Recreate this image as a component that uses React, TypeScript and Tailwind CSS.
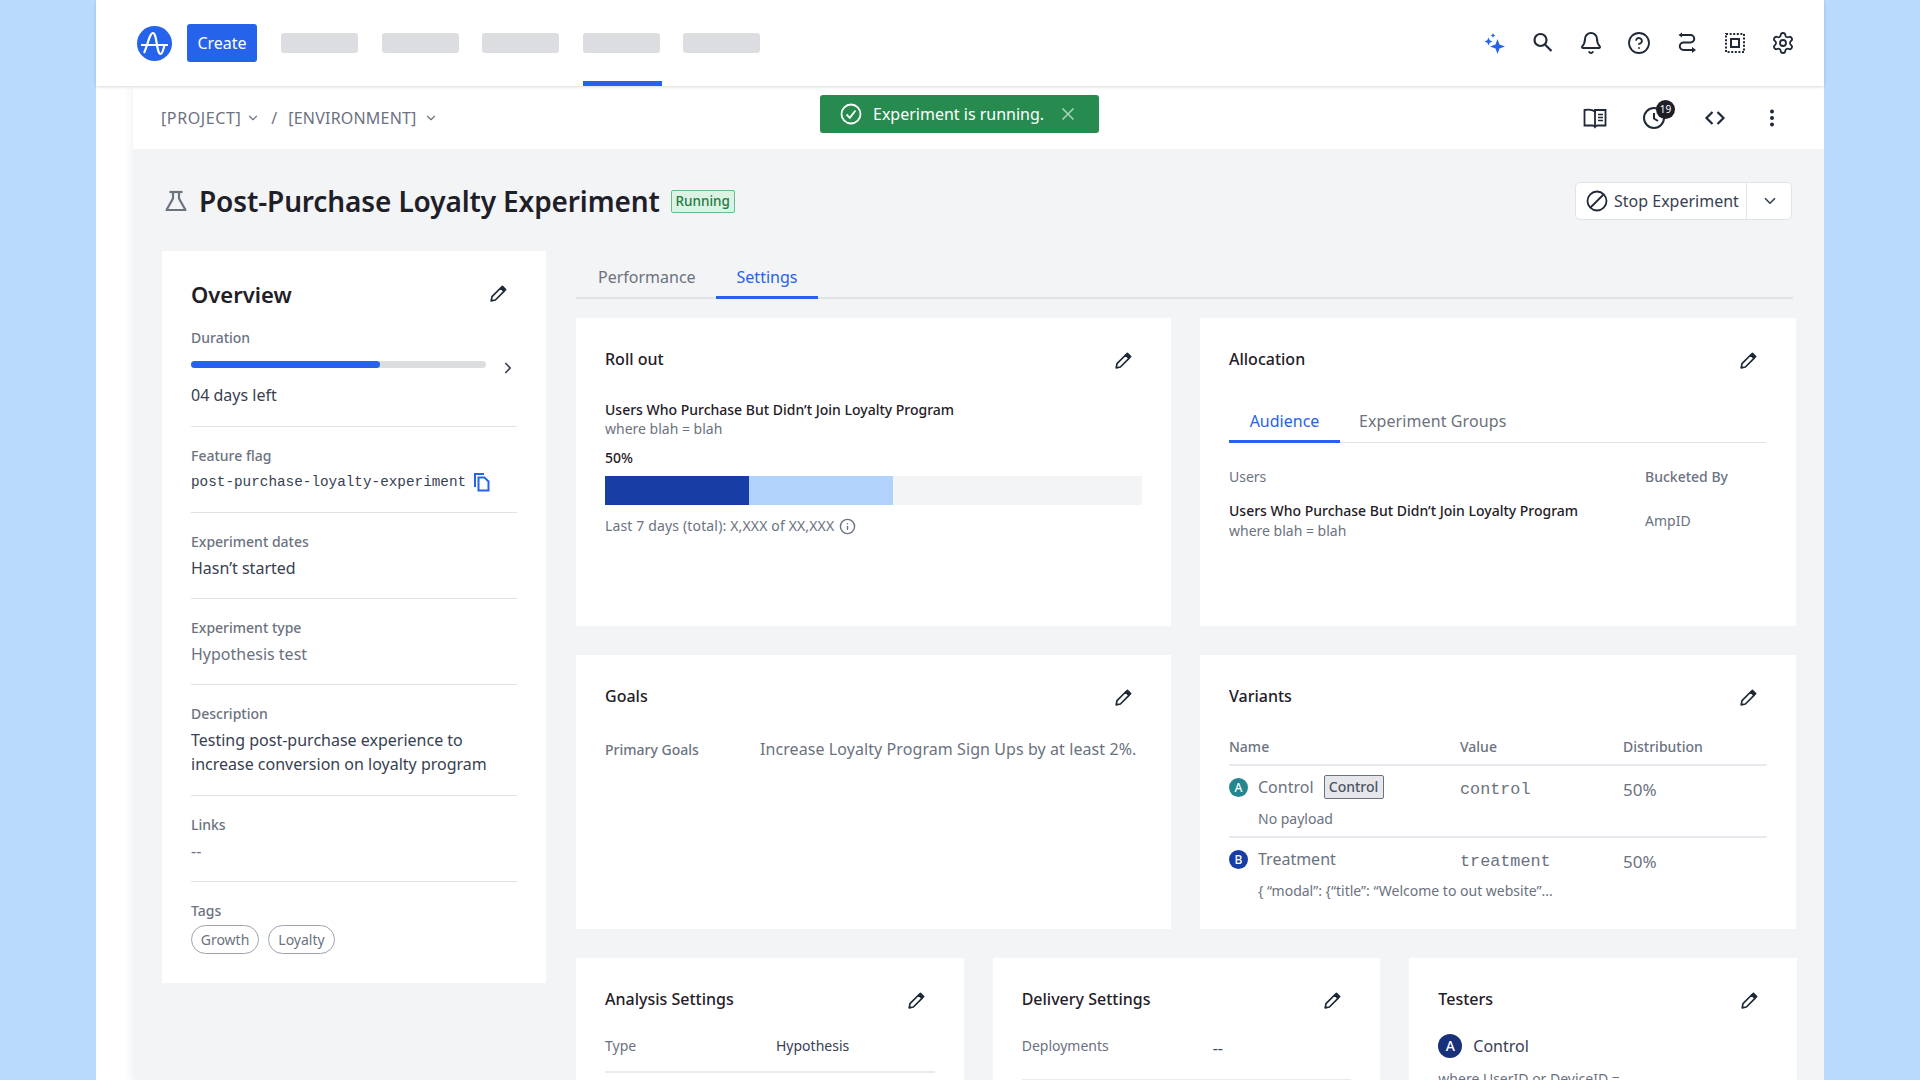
import { Bell, ChevronDown, ChevronRight, CircleHelp, Info, Settings } from 'lucide-react';

const PencilIcon = ({ className }: { className?: string }) => (
  <svg className={className} width="18" height="18" viewBox="0 0 18 18" fill="none" stroke="#1f2937" strokeWidth="1.7" strokeLinejoin="round">
    <path d="M2.200 15.800 3 11.600 11.600 3 15 6.400 6.400 15Z" />
    <path d="M13.400 1.400 16.600 4.600 15.200 6 12 2.800Z" fill="#1f2937" />
  </svg>
);

const SparkIcon = () => (
  <svg width="24" height="24" viewBox="0 0 24 24" fill="#2563eb">
    <path d="M14.500 8 16.500 13.500 22 15.500 16.500 17.500 14.500 23 12.500 17.500 7 15.500 12.500 13.500Z" />
    <path d="M5.500 6.500 6.700 9.300 9.500 10.500 6.700 11.700 5.500 14.500 4.300 11.700 1.500 10.500 4.300 9.300Z" />
    <path d="M10 2 10.800 3.700 12.500 4.500 10.800 5.300 10 7 9.200 5.300 7.500 4.500 9.200 3.700Z" />
  </svg>
);

const SearchIcon = () => (
  <svg width="24" height="24" viewBox="0 0 24 24" fill="none" stroke="#1f2937" strokeWidth="2.200">
    <circle cx="9.500" cy="9" r="6" />
    <path d="M14 13.500 20.500 20" />
  </svg>
);

const RouteIcon = () => (
  <svg width="24" height="24" viewBox="0 0 24 24" fill="none" stroke="#1f2937" strokeWidth="2">
    <path d="M6 4H15.500a3.500 3.500 0 0 1 0 7.500H8.500a3.500 3.500 0 0 0 0 7.500H17" />
    <path d="M17 16 21 19 17 22Z" fill="#1f2937" stroke="none" />
    <path d="M7 1.500 3.500 4 7 6.500Z" fill="#1f2937" stroke="none" />
  </svg>
);

const FrameIcon = () => (
  <svg width="24" height="24" viewBox="0 0 24 24" fill="none" stroke="#1f2937">
    <rect x="3" y="3" width="18" height="18" strokeWidth="2" strokeDasharray="2 1.600" />
    <rect x="8" y="8" width="8" height="8" strokeWidth="2" />
  </svg>
);

const BookIcon = () => (
  <svg width="26" height="26" viewBox="0 0 26 26" fill="none" stroke="#1f2937" strokeWidth="1.800">
    <path d="M13 6.500C11 5 6 4.500 2.500 5v15.500h8c1.200 0 2 .6 2.500 1.500.5-.9 1.300-1.500 2.500-1.500h8V5H13Z" />
    <path d="M13 6v15" />
    <path d="M16 9.500h5M16 12.500h5M16 15.500h5" strokeWidth="1.500" />
  </svg>
);

const ClockBadge = () => (
  <div className="relative w-6 h-6 mr-[2px]">
    <svg width="24" height="24" viewBox="0 0 24 24" fill="none" stroke="#1f2937" strokeWidth="2">
      <circle cx="12" cy="12" r="10" />
      <path d="M12 7v5.500l4 2.500" />
    </svg>
    <span className="absolute -top-[6px] left-[14px] w-[19px] h-[19px] rounded-full bg-[#1f2027] text-white text-[10px] leading-[19px] text-center">
      19
    </span>
  </div>
);

const CodeIcon = () => (
  <svg width="24" height="24" viewBox="0 0 24 24" fill="none" stroke="#1f2937" strokeWidth="2.200">
    <path d="M9.500 6 3.500 12l6 6M14.500 6l6 6-6 6" />
  </svg>
);

const KebabIcon = () => (
  <svg width="24" height="24" viewBox="0 0 24 24" fill="#1f2937">
    <circle cx="12" cy="5.500" r="2" />
    <circle cx="12" cy="12" r="2" />
    <circle cx="12" cy="18.500" r="2" />
  </svg>
);

const StopIcon = () => (
  <svg width="22" height="22" viewBox="0 0 22 22" fill="none" stroke="#1f2937" strokeWidth="1.800">
    <circle cx="11" cy="11" r="9.500" />
    <path d="M4.500 17.500 17.500 4.500" />
  </svg>
);

const FlaskIcon = () => (
  <svg width="24" height="24" viewBox="0 0 24 24" fill="none" stroke="#6b7280" strokeWidth="2.200" strokeLinejoin="round">
    <path d="M5.500 3h13" />
    <path d="M9 3v6.500L2.500 21h19L15 9.500V3" />
  </svg>
);

const CopyIcon = () => (
  <svg width="18" height="20" viewBox="0 0 18 20" fill="none" stroke="#2563eb" strokeWidth="2">
    <path d="M2 15V2h9" />
    <path d="M5.500 5.500h6l4 4v9h-10Z" />
  </svg>
);

const CheckCircleIcon = () => (
  <svg width="22" height="22" viewBox="0 0 22 22" fill="none" stroke="#fff" strokeWidth="1.800">
    <circle cx="11" cy="11" r="9.500" />
    <path d="M6.500 11.500 9.800 14.800 15.500 7.500" />
  </svg>
);

const Logo = () => (
  <svg width="35" height="35" viewBox="0 0 35 35">
    <circle cx="17.500" cy="17.500" r="17.500" fill="#2563eb" />
    <path d="M4 19H31" fill="none" stroke="#fff" strokeWidth="2" />
    <path d="M7 27C10.500 20 12.500 7 16 7C20 7 19.500 28 23.500 28C25.500 28 26.500 23 27.500 19" fill="none" stroke="#fff" strokeWidth="2.200" />
  </svg>
);

const Card = ({ title, children }: { title: string; children?: React.ReactNode }) => (
  <div className="bg-white pt-[29px] px-[29px] h-full">
    <div className="flex items-start justify-between h-6">
      <h3 className="text-base leading-6 font-medium text-[#1f2027]">{title}</h3>
      <PencilIcon className="mr-[10px] mt-[5px]" />
    </div>
    {children}
  </div>
);

const OverviewField = ({ label, children }: { label: string; children: React.ReactNode }) => (
  <div className="pt-[19px] pb-[18px] border-b border-[#e1e3e8]">
    <p className="text-sm leading-5 font-medium text-[#6b7280]">{label}</p>
    <div className="mt-1 text-base leading-6 text-[#374151]">{children}</div>
  </div>
);

const Tag = ({ label, width }: { label: string; width: string }) => (
  <span className={`h-[29px] rounded-full border border-[#9ca3af] text-sm leading-[27px] text-center text-[#6b7280] ${width}`}>
    {label}
  </span>
);

const VariantRow = ({
  letter,
  color,
  name,
  tag,
  value,
  payload,
  last,
}: {
  letter: string;
  color: string;
  name: string;
  tag?: boolean;
  value: string;
  payload: string;
  last?: boolean;
}) => (
  <div className={`grid grid-cols-[231px_163px_1fr] pt-[9px] ${last ? '' : 'pb-[7px] border-b-2 border-[#e9eaef]'}`}>
    <div>
      <div className="flex items-center h-6">
        <span className={`w-[19px] h-[19px] rounded-full text-white text-xs font-medium leading-[19px] text-center ${color}`}>{letter}</span>
        <span className="ml-[10px] text-base text-[#6b7280]">{name}</span>
        {tag && (
          <span className="ml-[10px] w-[60px] h-6 rounded-[2px] border border-[#6b7280] bg-[#e5e7eb] text-sm font-medium leading-[22px] text-center text-[#4b5563]">
            Control
          </span>
        )}
      </div>
      <p className="mt-[10px] ml-[29px] text-sm leading-5 whitespace-nowrap text-[#6b7280]">{payload}</p>
    </div>
    <p className="mt-[3px] font-['Liberation_Mono',monospace] text-[16.800px] leading-6 text-[#6b7280]">{value}</p>
    <p className="mt-[3px] text-[17px] leading-6 text-[#6b7280]">50%</p>
  </div>
);

export default function App() {
  return (
    <div className="w-[1920px] h-[1080px] overflow-hidden bg-[#b9dafd] px-[96px] font-['Noto_Sans',sans-serif]">
      <div className="relative flex flex-col h-full bg-white">
        <header className="relative z-10 flex items-center justify-between shrink-0 h-[86px] pl-[41px] pr-[29px] bg-white shadow-[0_1px_3px_rgba(0,0,0,0.15)]">
          <div className="flex items-center h-full">
            <Logo />
            <button className="ml-[15px] w-[70px] h-[38px] rounded-[3px] bg-[#2563eb] text-base text-white">Create</button>
            <nav className="flex items-center gap-[23.500px] ml-6 h-full">
              <div className="w-[77px] h-5 rounded-[3px] bg-[#dcdde1]" />
              <div className="w-[77px] h-5 rounded-[3px] bg-[#dcdde1]" />
              <div className="w-[77px] h-5 rounded-[3px] bg-[#dcdde1]" />
              <div className="relative flex items-center w-[77px] h-full">
                <div className="w-[77px] h-5 rounded-[3px] bg-[#dcdde1]" />
                <div className="absolute bottom-0 left-0 w-[79px] h-[5px] bg-[#2563eb]" />
              </div>
              <div className="w-[77px] h-5 rounded-[3px] bg-[#dcdde1]" />
            </nav>
          </div>
          <div className="flex items-center gap-6 text-[#1f2937]">
            <SparkIcon />
            <SearchIcon />
            <Bell size={24} strokeWidth={2} />
            <CircleHelp size={24} strokeWidth={1.8} />
            <RouteIcon />
            <FrameIcon />
            <Settings size={24} strokeWidth={1.8} />
          </div>
        </header>

        <div className="absolute left-[724px] top-[95px] z-20 flex items-center w-[279px] h-[38px] rounded-[3px] bg-[#278a4f] pl-[20px] text-white">
          <CheckCircleIcon />
          <span className="ml-[11px] text-base whitespace-nowrap">Experiment is running.</span>
          <svg className="ml-[16px]" width="16" height="16" viewBox="0 0 16 16" fill="none" stroke="#a7d3b8" strokeWidth="1.600">
            <path d="M2.500 2.500 13.500 13.500M13.500 2.500 2.500 13.500" />
          </svg>
        </div>

        <div className="flex flex-1 min-h-0">
          <div className="w-[37px] shrink-0 bg-white" />
          <main className="flex-1 min-w-0 flex flex-col shadow-[-4px_0_6px_rgba(0,0,0,0.04)]">
            <div className="flex items-center justify-between shrink-0 h-[63px] pl-[28px] pr-[40px] bg-white">
              <div className="flex items-center text-base text-[#6b7280]">
                <span className="tracking-[0.600px]">[PROJECT]</span>
                <ChevronDown size={14} className="ml-[5px]" />
                <span className="ml-[11px]">/</span>
                <span className="ml-[11px] tracking-[0.200px]">[ENVIRONMENT]</span>
                <ChevronDown size={14} className="ml-[7px]" />
              </div>
              <div className="flex items-center">
                <BookIcon />
                <div className="ml-[34px]"><ClockBadge /></div>
                <div className="ml-[35px]"><CodeIcon /></div>
                <div className="ml-[33px]"><KebabIcon /></div>
              </div>
            </div>

            <div className="flex-1 min-h-0 bg-[#f3f4f6] pt-[33px] pl-[29px]">
              <div className="flex items-center h-[38px] pr-[32px]">
                <div className="ml-[2px]"><FlaskIcon /></div>
                <h1 className="ml-[11px] text-[28px] tracking-[-0.120px] leading-[38px] font-semibold whitespace-nowrap text-[#1f2027]">Post-Purchase Loyalty Experiment</h1>
                <span className="ml-[11px] w-[64px] h-[23px] rounded-[2px] border border-[#6dbb8c] bg-[#dcf3e4] text-[13.500px] font-medium leading-[21px] text-center text-[#1f7a45]">
                  Running
                </span>
                <div className="ml-auto flex h-[38px] rounded-[5px] border border-[#e1e3e8] bg-white text-[#374151]">
                  <div className="flex items-center w-[171px] pl-[10px] border-r border-[#e1e3e8]">
                    <StopIcon />
                    <span className="ml-[6px] text-base whitespace-nowrap">Stop Experiment</span>
                  </div>
                  <div className="flex items-center justify-center w-[44px] pl-[2px]">
                    <ChevronDown size={18} strokeWidth={2.2} />
                  </div>
                </div>
              </div>

              <div className="flex gap-[30px] mt-[31px] items-start">
                <aside className="w-[384px] shrink-0 bg-white pt-[28px] pl-[29px] pr-[29px] pb-[29px]">
                  <div className="flex items-center justify-between h-[30px]">
                    <h2 className="text-[22px] leading-[30px] font-semibold text-[#1f2027]">Overview</h2>
                    <PencilIcon className="mr-[10px]" />
                  </div>
                  <div className="pb-[19px] border-b border-[#e1e3e8]">
                    <p className="mt-[19px] text-sm leading-5 font-medium text-[#6b7280]">Duration</p>
                    <div className="flex items-center h-[7px] mt-[13px]">
                      <div className="w-[297px] h-[7px] rounded-full bg-[#dcdde1]">
                        <div className="w-[189px] h-[7px] rounded-full bg-[#2563eb]" />
                      </div>
                      <ChevronRight size={18} strokeWidth={2.2} className="ml-[13px] mt-[6px] shrink-0 text-[#374151]" />
                    </div>
                    <p className="mt-[15px] text-base leading-6 text-[#374151]">04 days left</p>
                  </div>
                  <OverviewField label="Feature flag">
                    <div className="flex items-center">
                      <span className="font-['Liberation_Mono',monospace] text-[14.330px]">post-purchase-loyalty-experiment</span>
                      <span className="ml-[7px]"><CopyIcon /></span>
                    </div>
                  </OverviewField>
                  <OverviewField label="Experiment dates">Hasn’t started</OverviewField>
                  <OverviewField label="Experiment type"><span className="text-[#6b7280]">Hypothesis test</span></OverviewField>
                  <OverviewField label="Description">
                    <p className="w-[326px] pb-[1px]">Testing post-purchase experience to increase conversion on loyalty program</p>
                  </OverviewField>
                  <OverviewField label="Links"><span className="text-[#6b7280]">--</span></OverviewField>
                  <div className="pt-[19px]">
                    <p className="text-sm leading-5 font-medium text-[#6b7280]">Tags</p>
                    <div className="flex gap-[9px] mt-1">
                      <Tag label="Growth" width="w-[68px]" />
                      <Tag label="Loyalty" width="w-[67px]" />
                    </div>
                  </div>
                </aside>

                <section className="w-[1221px] shrink-0">
                  <div className="flex items-end w-[1217px] h-[48px] border-b-2 border-[#e1e3e8] text-base">
                    <div className="w-[140px] h-[32px] pl-[22px] text-[#6b7280]">Performance</div>
                    <div className="relative w-[102px] h-[32px] text-center text-[#2563eb]">
                      Settings
                      <div className="absolute -bottom-[2px] left-0 w-full h-[3px] bg-[#2563eb]" />
                    </div>
                  </div>

                  <div className="grid grid-cols-[595px_596px] gap-x-[29px] mt-[19px]">
                    <div className="h-[308px]">
                      <Card title="Roll out">
                        <p className="mt-[29px] text-sm leading-5 font-medium text-[#1f2027]">Users Who Purchase But Didn’t Join Loyalty Program</p>
                        <p className="-mt-px text-sm leading-5 text-[#6b7280]">where blah = blah</p>
                        <p className="mt-[9px] text-sm leading-5 font-medium text-[#1f2027]">50%</p>
                        <div className="flex w-[537px] h-[29px] mt-2 bg-[#f3f4f6]">
                          <div className="w-[144px] bg-[#173ea5]" />
                          <div className="w-[144px] bg-[#b1d2fb]" />
                        </div>
                        <div className="flex items-center mt-[11px] h-5 text-sm text-[#6b7280]">
                          <span className="tracking-[0.150px]">Last 7 days (total): X,XXX of XX,XXX</span>
                          <Info size={17} className="ml-[5px]" />
                        </div>
                      </Card>
                    </div>
                    <div className="h-[308px]">
                      <Card title="Allocation">
                        <div className="flex w-[537px] h-[42px] mt-[30px] pt-2 border-b border-[#e1e3e8] text-base">
                          <div className="relative w-[111px] text-center text-[#2563eb]">
                            Audience
                            <div className="absolute -bottom-px left-0 w-full h-[3px] bg-[#2563eb]" />
                          </div>
                          <div className="ml-[19px] tracking-[0.100px] text-[#6b7280]">Experiment Groups</div>
                        </div>
                        <div className="grid grid-cols-[416px_1fr] mt-6 text-sm leading-5">
                          <p className="text-[#6b7280]">Users</p>
                          <p className="font-medium text-[#6b7280]">Bucketed By</p>
                          <div className="mt-[14px]">
                            <p className="font-medium text-[#1f2027]">Users Who Purchase But Didn’t Join Loyalty Program</p>
                            <p className="text-[#6b7280]">where blah = blah</p>
                          </div>
                          <p className="mt-6 text-[#6b7280]">AmpID</p>
                        </div>
                      </Card>
                    </div>
                  </div>

                  <div className="grid grid-cols-[595px_596px] gap-x-[29px] mt-[29px]">
                    <div className="h-[274px]">
                      <Card title="Goals">
                        <div className="flex items-center h-6 mt-[30px]">
                          <span className="w-[155px] text-sm font-medium text-[#6b7280]">Primary Goals</span>
                          <span className="mb-[2px] text-base tracking-[0.080px] text-[#6b7280] whitespace-nowrap">Increase Loyalty Program Sign Ups by at least 2%.</span>
                        </div>
                      </Card>
                    </div>
                    <div className="h-[274px]">
                      <Card title="Variants">
                        <div className="grid grid-cols-[231px_163px_1fr] mt-[29px] pb-[7px] border-b-2 border-[#e9eaef] text-sm leading-5 font-medium text-[#6b7280]">
                          <span>Name</span>
                          <span>Value</span>
                          <span>Distribution</span>
                        </div>
                        <VariantRow letter="A" color="bg-[#24868f]" name="Control" tag value="control" payload="No payload" />
                        <VariantRow letter="B" color="bg-[#173ea5]" name="Treatment" value="treatment" payload="{ “modal”: {“title”: “Welcome to out website”..." last />
                      </Card>
                    </div>
                  </div>

                  <div className="grid grid-cols-3 gap-x-[29px] mt-[29px]">
                    <div className="h-[300px]">
                      <Card title="Analysis Settings">
                        <div className="flex mt-[25px] pb-[15px] border-b-2 border-[#e9eaef] text-sm leading-5">
                          <span className="w-[171px] text-[#6b7280]">Type</span>
                          <span className="text-[#374151]">Hypothesis</span>
                        </div>
                      </Card>
                    </div>
                    <div className="h-[300px]">
                      <Card title="Delivery Settings">
                        <div className="flex mt-[25px] pb-[19px] border-b-2 border-[#e9eaef] text-sm leading-5">
                          <span className="w-[191px] text-[#6b7280]">Deployments</span>
                          <span className="text-base text-[#374151]">--</span>
                        </div>
                      </Card>
                    </div>
                    <div className="h-[300px]">
                      <Card title="Testers">
                        <div className="flex items-center mt-[23px] h-6">
                          <span className="w-6 h-6 rounded-full bg-[#173077] text-white text-sm font-medium leading-6 text-center">A</span>
                          <span className="ml-[11px] text-base text-[#374151]">Control</span>
                        </div>
                        <p className="mt-[11px] text-sm leading-5 text-[#6b7280]">where UserID or DeviceID =</p>
                      </Card>
                    </div>
                  </div>
                </section>
              </div>
            </div>
          </main>
        </div>
      </div>
    </div>
  );
}
